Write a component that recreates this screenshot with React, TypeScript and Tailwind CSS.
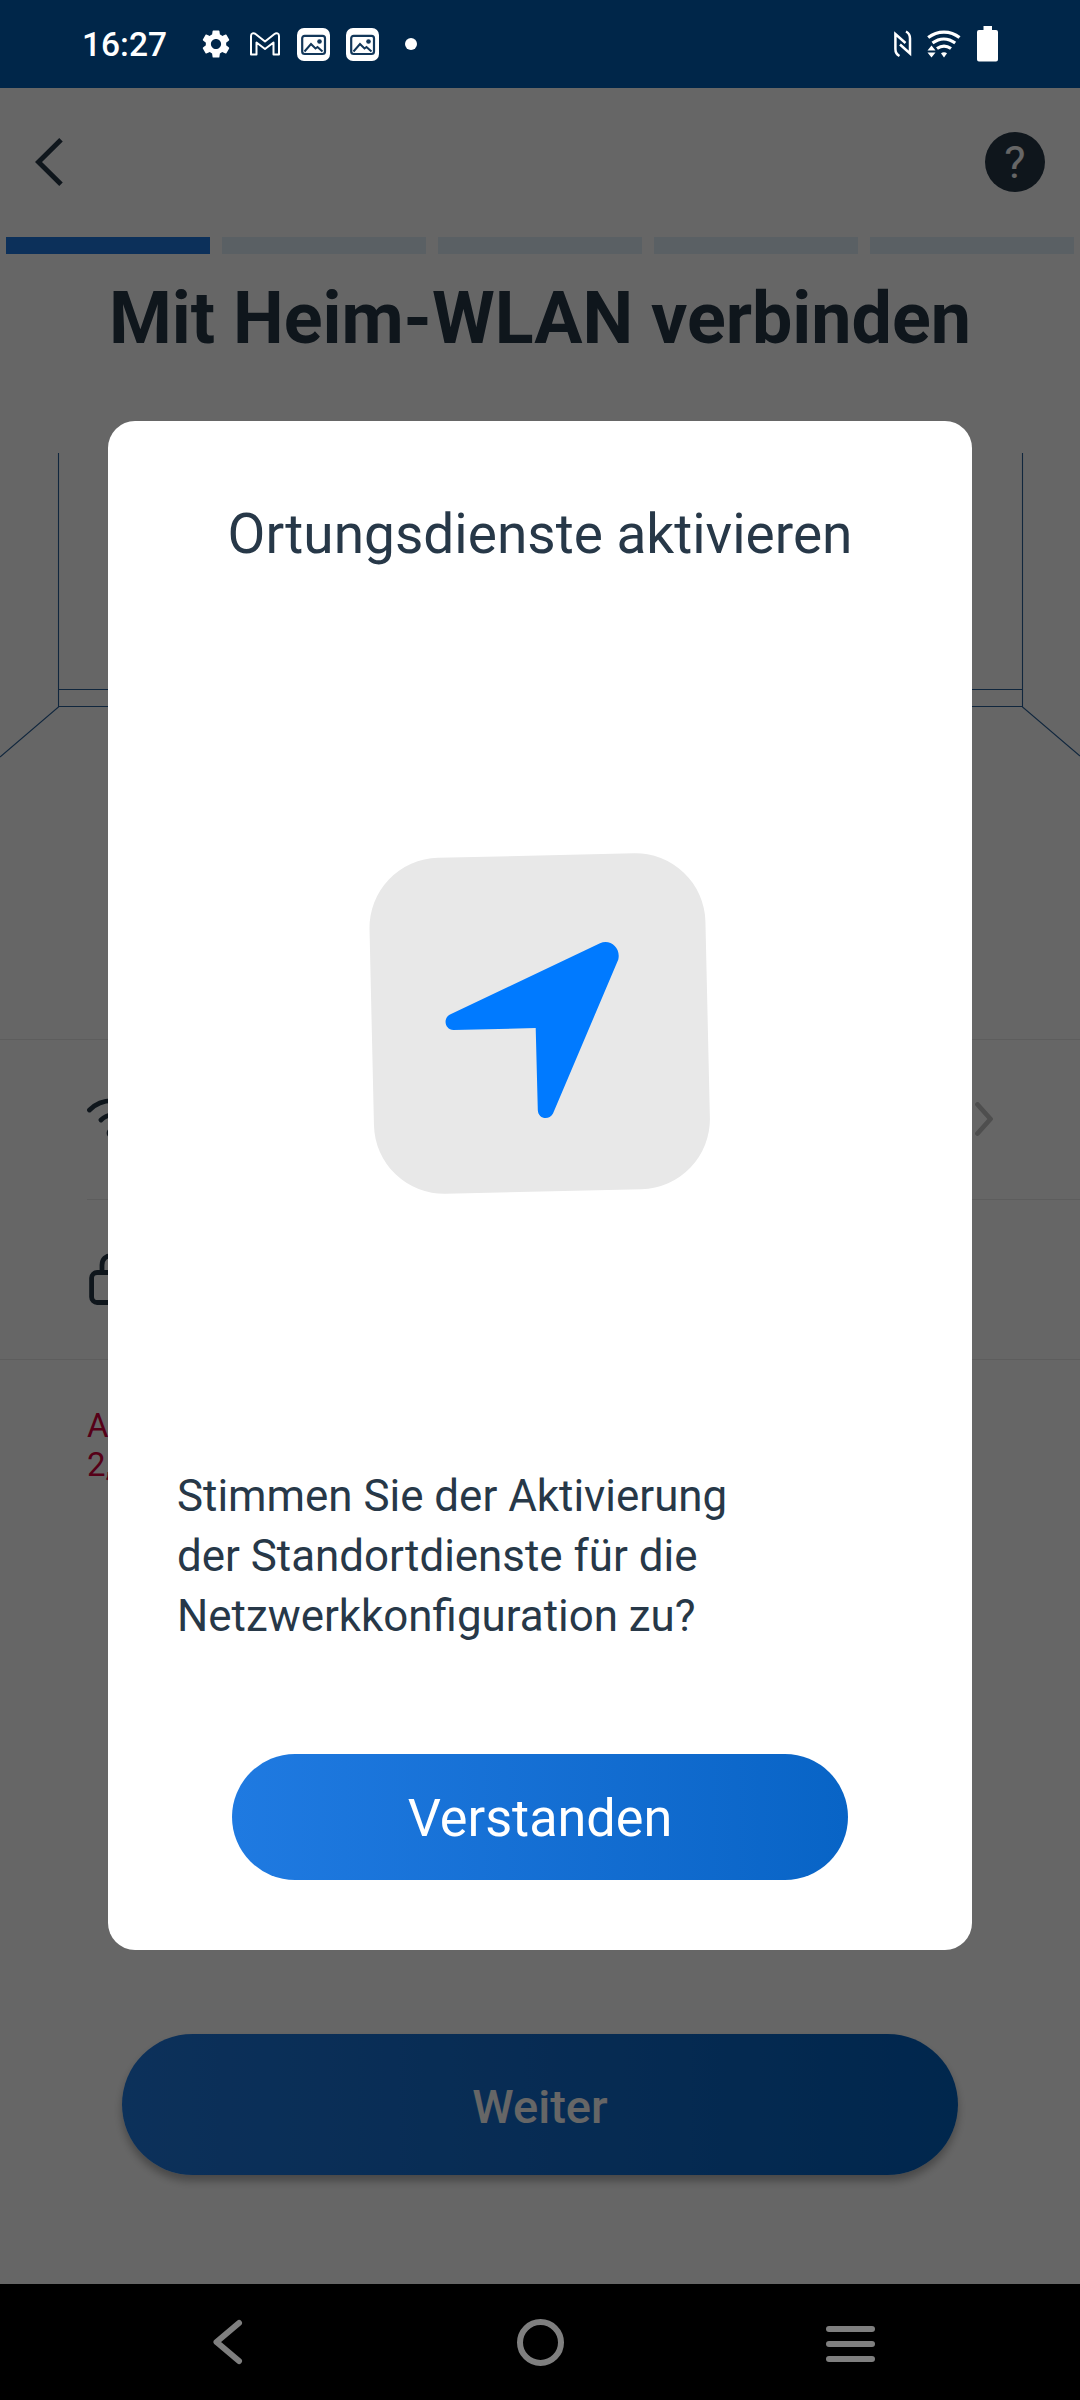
import { MdSettings } from 'react-icons/md';

const STEPS = [true, false, false, false, false];

function PictureIcon() {
  return (
    <svg width="33" height="33" viewBox="0 0 33 33">
      <rect width="33" height="33" rx="7" fill="#fff" />
      <rect x="5.2" y="7.8" width="22.8" height="18.2" rx="2.5" fill="none" stroke="#12375a" strokeWidth="2.2" />
      <path d="M7.500 23.500 14 16 18.500 20.500 20.500 19 25.500 23.500" fill="none" stroke="#12375a" strokeWidth="2" />
      <circle cx="22.500" cy="13.500" r="2.3" fill="#12375a" />
    </svg>
  );
}

function StatusBar() {
  return (
    <header className="flex h-[88px] items-center bg-[#002649] pl-[82px] pr-[82px] text-white">
      <span className="w-[117px] pt-[2px] text-[33.5px] font-medium leading-none">16:27</span>
      <MdSettings className="h-[34px] w-[34px]" />
      <svg className="ml-[17px]" width="30" height="24" viewBox="0 0 30 24" fill="none" stroke="#fff" strokeWidth="2" strokeLinejoin="round">
        <path d="M1 22.500V4C1 1.300 3.500.5 5.500 2L15 9.500 24.500 2C26.500.5 29 1.300 29 4V22.500H23.500V10.500L15 17 6.500 10.500V22.500Z" />
      </svg>
      <div className="ml-[17px] flex gap-4">
        <PictureIcon />
        <PictureIcon />
      </div>
      <span className="ml-[26px] h-3 w-3 rounded-full bg-white" />
      <div className="ml-auto flex items-center">
        <svg width="18" height="28" viewBox="0 0 18 28" fill="none" stroke="#fff" strokeWidth="2.500">
          <path d="M5.500 26C2.500 24.500 1.400 22 1.400 19V4L11.500 13" />
          <path d="M12 1.500C15 3 16 5.500 16 8.500V23.500L6 14.500" />
        </svg>
        <svg className="ml-[15px]" width="34" height="28" viewBox="0 0 34 28" fill="none" stroke="#fff" strokeWidth="3.200">
          <path d="M1.200 7.500C10.500.2 23.500.2 32.500 7.500" />
          <path d="M5.500 13C12.500 7.700 21 7.700 28.200 13" />
          <path d="M10 18.500C14.500 15.300 19.500 15.300 24 18.500" />
          <path d="M14 23.300C15.500 21.800 18.500 21.800 20 23.300L17 27.500Z" fill="#fff" stroke="none" />
          <path d="M4.500 15.500 8.500 20.500H.5ZM.5 22.500H8.500L4.500 27.500Z" fill="#fff" stroke="none" />
        </svg>
        <svg className="ml-[16px]" width="21" height="36" viewBox="0 0 21 36" fill="#fff">
          <path d="M6.500 0H15V4H19Q21 4 21 6V33.500Q21 35.500 19 35.500H2Q0 35.500 0 33.500V6Q0 4 2 4H6.500Z" />
        </svg>
      </div>
    </header>
  );
}

function SetupPage() {
  return (
    <div className="flex h-full flex-col bg-white text-[#273848]">
      <div className="flex h-[149px] shrink-0 items-center justify-between px-[35px] pb-px">
        <svg width="28" height="48" viewBox="0 0 28 48" fill="none" stroke="currentColor" strokeWidth="5">
          <path d="M26 1.800 3.500 24 26 46.200" />
        </svg>
        <div className="flex h-[60px] w-[60px] items-center justify-center rounded-full bg-[#273848] text-[45px] leading-none text-white">
          ?
        </div>
      </div>

      <div className="flex h-[17px] shrink-0 gap-3 px-[6px]">
        {STEPS.map((done, i) => (
          <div key={i} className={done ? 'flex-1 bg-[#1e78e1]' : 'flex-1 bg-[#e1f0fb]'} />
        ))}
      </div>

      <h1 className="mt-[21px] h-[88px] shrink-0 whitespace-nowrap text-center text-[71.8px] font-bold leading-[88px]">
        Mit Heim-WLAN verbinden
      </h1>

      {/* room outline */}
      <svg className="mt-[90px] shrink-0" width="1080" height="310" viewBox="0 0 1080 310" fill="none" stroke="#2a6099" strokeWidth="1.1">
        <path d="M58.500 0V254L0 304M1022.500 0V254L1080 303M58.500 236.500H1022.500M58.500 253.500H1022.500" />
      </svg>

      <div className="mt-[276px] shrink-0 border-y border-[#e8e8e8]">
        <div className="flex h-[159px] items-center justify-between pb-[2px] pl-[87px] pr-[86px]">
          <svg width="50" height="42" viewBox="0 0 50 42" fill="none" stroke="currentColor" strokeWidth="4.800" strokeLinecap="round">
            <path d="M2.500 12C15-.5 35-.5 47.500 12M14 22C20.500 15.500 29.500 15.500 36 22" />
            <circle cx="25" cy="35" r="3" fill="currentColor" />
          </svg>
          <svg width="20" height="34" viewBox="0 0 20 34" fill="none" stroke="#c2c2c2" strokeWidth="4.800" strokeLinecap="round" strokeLinejoin="round">
            <path d="M3.500 2.500 16.500 17 3.500 31.500" />
          </svg>
        </div>
        <div className="ml-[87px] flex h-[160px] items-center border-t border-[#e8e8e8] pb-px">
          <svg width="48" height="54" viewBox="0 0 48 54" fill="none" stroke="currentColor" strokeWidth="4.800">
            <rect x="4.600" y="20.500" width="38" height="30" rx="5.500" />
            <path d="M15 20.500V13C15 .5 32.500.5 32.500 13V20.500" />
          </svg>
        </div>
      </div>

      <p className="ml-[87px] mt-[46px] shrink-0 text-[33px] leading-[39px] text-[#d6003c]">
        A
        <br />
        2,
      </p>

      <button className="mx-auto mb-[109px] mt-auto h-[141px] w-[836px] shrink-0 rounded-full bg-linear-to-r from-[#1f7ae1] to-[#0261c0] pt-[5px] text-[47px] font-medium text-white shadow-[0_6px_9px_rgba(0,0,0,0.3)]">
        Weiter
      </button>
    </div>
  );
}

function LocationDialog() {
  return (
    <div className="flex h-[1529px] w-[864px] flex-col items-center rounded-[27px] bg-white pt-[81px] text-[#273848]">
      <h2 className="text-[55px] leading-[64px]">Ortungsdienste aktivieren</h2>
      <svg className="mt-[254px]" width="400" height="400" viewBox="0 0 400 400">
        <rect x="31.700" y="35.500" width="336" height="336" rx="70" fill="#e8e8e8" transform="rotate(-1.3 199.7 203.5)" />
        <path
          fill="#007aff"
          d="M110 194.500 260 123.300C270 118.800 281 127.500 278.300 139.500L213 293.500C209 301 198 299 197.800 290L195.700 208 113.500 210C105 210 102.500 198.500 110 194.500Z"
        />
      </svg>
      <p className="mt-[246px] w-[726px] text-[43.9px] leading-[60px]">
        Stimmen Sie der Aktivierung
        <br />
        der Standortdienste für die
        <br />
        Netzwerkkonfiguration zu?
      </p>
      <button className="mb-[70px] mt-auto h-[126px] w-[616px] rounded-full bg-linear-to-r from-[#1f7ae1] to-[#0864c6] pt-[4px] text-[52.2px] text-white">
        Verstanden
      </button>
    </div>
  );
}

function NavBar() {
  return (
    <nav className="grid h-[116px] grid-cols-[305px_1fr_305px] items-center bg-black">
      <svg className="ml-[212px]" width="32" height="46" viewBox="0 0 32 46" fill="none" stroke="#7f7f7f" strokeWidth="6" strokeLinecap="round" strokeLinejoin="round">
        <path d="M27 4 4.500 23 27 42" />
      </svg>
      <span className="mx-auto h-[47px] w-[47px] rounded-full border-[6px] border-[#7f7f7f]" />
      <div className="ml-[51px] mt-[3px] flex w-[49px] flex-col gap-[9px]">
        <span className="h-[6px] rounded-full bg-[#7f7f7f]" />
        <span className="h-[6px] rounded-full bg-[#7f7f7f]" />
        <span className="h-[6px] rounded-full bg-[#7f7f7f]" />
      </div>
    </nav>
  );
}

export default function App() {
  return (
    <div className="flex h-[2400px] w-[1080px] flex-col overflow-hidden font-[Roboto,sans-serif]">
      <StatusBar />
      <main className="relative h-[2196px]">
        <SetupPage />
        <div className="absolute inset-0 flex items-center justify-center bg-black/60 pb-px">
          <LocationDialog />
        </div>
      </main>
      <NavBar />
    </div>
  );
}
